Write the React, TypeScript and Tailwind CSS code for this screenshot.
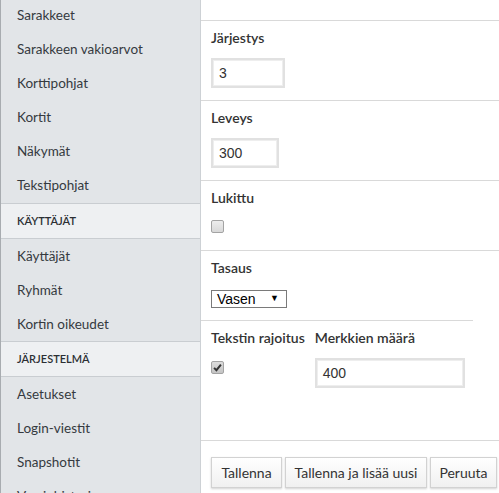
import { type FC } from 'react';

const font = { fontFamily: 'Lato, "Noto Sans", sans-serif' };

const navTop = ['Sarakkeet', 'Sarakkeen vakioarvot', 'Korttipohjat', 'Kortit', 'Näkymät', 'Tekstipohjat'];
const navUsers = ['Käyttäjät', 'Ryhmät', 'Kortin oikeudet'];
const navSystem = ['Asetukset', 'Login-viestit', 'Snapshotit', 'Versiohistoria'];

const NavItem: FC<{ label: string }> = ({ label }) => (
  <div className="flex h-[34px] shrink-0 items-center px-4 text-[13.5px] text-[#353a3f]">{label}</div>
);

const NavHeader: FC<{ label: string }> = ({ label }) => (
  <div className="flex h-[36px] shrink-0 items-center border-y border-[#c9cdd1] bg-[#eef0f2] px-4 text-[11px] font-semibold text-[#2b2f33]">
    {label}
  </div>
);

const Label: FC<{ children: string }> = ({ children }) => (
  <div className="h-5 text-[14px] leading-5 font-semibold text-[#333]">{children}</div>
);

const TextInput: FC<{ value: string; width: string }> = ({ value, width }) => (
  <div
    className={`flex h-[30px] items-center border-2 border-[#e1e1e1] bg-white px-[6px] text-[14px] text-[#333] shadow-[inset_0_0_0_1px_#eeeeee] ${width}`}
    style={{ fontFamily: '"Liberation Sans", Arial, sans-serif' }}
  >
    {value}
  </div>
);

const CheckBox: FC<{ checked?: boolean }> = ({ checked }) => (
  <span
    className={`flex h-[13px] w-[13px] items-center justify-center rounded-[2px] border border-[#a3a3a3] bg-gradient-to-b ${
      checked ? 'from-[#dcdcdc] to-[#c4c4c4]' : 'from-[#ededed] to-[#d8d8d8]'
    }`}
  >
    {checked && (
      <svg viewBox="0 0 10 10" className="h-[9px] w-[9px]">
        <path d="M1.2 5.4 L3.8 8 L8.8 1.8" fill="none" stroke="#333" strokeWidth="2.2" />
      </svg>
    )}
  </span>
);

const Button: FC<{ label: string; width: string }> = ({ label, width }) => (
  <button
    type="button"
    className={`flex h-[31px] shrink-0 items-center justify-center border border-[#d2d2d2] bg-gradient-to-b from-white to-[#f0f0f0] text-[14px] text-[#333] shadow-[0_1px_2px_rgba(0,0,0,0.18)] ${width}`}
  >
    {label}
  </button>
);

export default function App() {
  return (
    <div className="flex h-[493px] w-[499px] overflow-hidden bg-white" style={font}>
      <aside className="flex w-[201px] shrink-0 flex-col border-r border-l border-r-[#cdd1d5] border-l-[#a8acb0] bg-[#e2e5e8]">
        <div className="-mt-[2px] flex flex-col">
          {navTop.map((l) => (
            <NavItem key={l} label={l} />
          ))}
        </div>
        <div className="mt-px flex flex-col">
          <NavHeader label="KÄYTTÄJÄT" />
        </div>
        {navUsers.map((l) => (
          <NavItem key={l} label={l} />
        ))}
        <NavHeader label="JÄRJESTELMÄ" />
        {navSystem.map((l) => (
          <NavItem key={l} label={l} />
        ))}
      </aside>

      <main className="flex min-w-0 flex-1 flex-col">
        <div className="h-[21px] shrink-0 border-b border-[#d9d9d9]" />

        <section className="flex h-[80px] shrink-0 flex-col gap-[10px] border-b border-[#d9d9d9] px-[10px] pt-[7px]">
          <Label>Järjestys</Label>
          <TextInput value="3" width="w-[74px]" />
        </section>

        <section className="flex h-[80px] shrink-0 flex-col gap-[10px] border-b border-[#d9d9d9] px-[10px] pt-[7px]">
          <Label>Leveys</Label>
          <TextInput value="300" width="w-[68px]" />
        </section>

        <section className="flex h-[70px] shrink-0 flex-col gap-[12px] border-b border-[#d9d9d9] px-[10px] pt-[7px]">
          <Label>Lukittu</Label>
          <CheckBox />
        </section>

        <section className="flex h-[69px] shrink-0 flex-col gap-[12px] px-[10px] pt-[7px]">
          <Label>Tasaus</Label>
          <div
            className="flex h-[18px] w-[76px] items-center justify-between border border-[#7a7a7a] bg-white pr-[7px] pl-[5px] text-[14px] text-black"
            style={{ fontFamily: '"Liberation Sans", Arial, sans-serif' }}
          >
            <span>Vasen</span>
            <span className="text-[9px]">▼</span>
          </div>
        </section>
        <div className="h-px w-[272px] shrink-0 bg-[#d9d9d9]" />

        <section className="flex h-[120px] shrink-0 gap-[10px] border-b border-[#d9d9d9] px-[10px] pt-[7px]">
          <div className="flex flex-col gap-[13px]">
            <Label>Tekstin rajoitus</Label>
            <CheckBox checked />
          </div>
          <div className="flex flex-col gap-[10px]">
            <Label>Merkkien määrä</Label>
            <TextInput value="400" width="w-[150px]" />
          </div>
        </section>

        <div className="flex gap-[3px] px-[10px] pt-[16px]">
          <Button label="Tallenna" width="w-[71px]" />
          <Button label="Tallenna ja lisää uusi" width="w-[142px]" />
          <Button label="Peruuta" width="w-[67px]" />
        </div>
      </main>
    </div>
  );
}
